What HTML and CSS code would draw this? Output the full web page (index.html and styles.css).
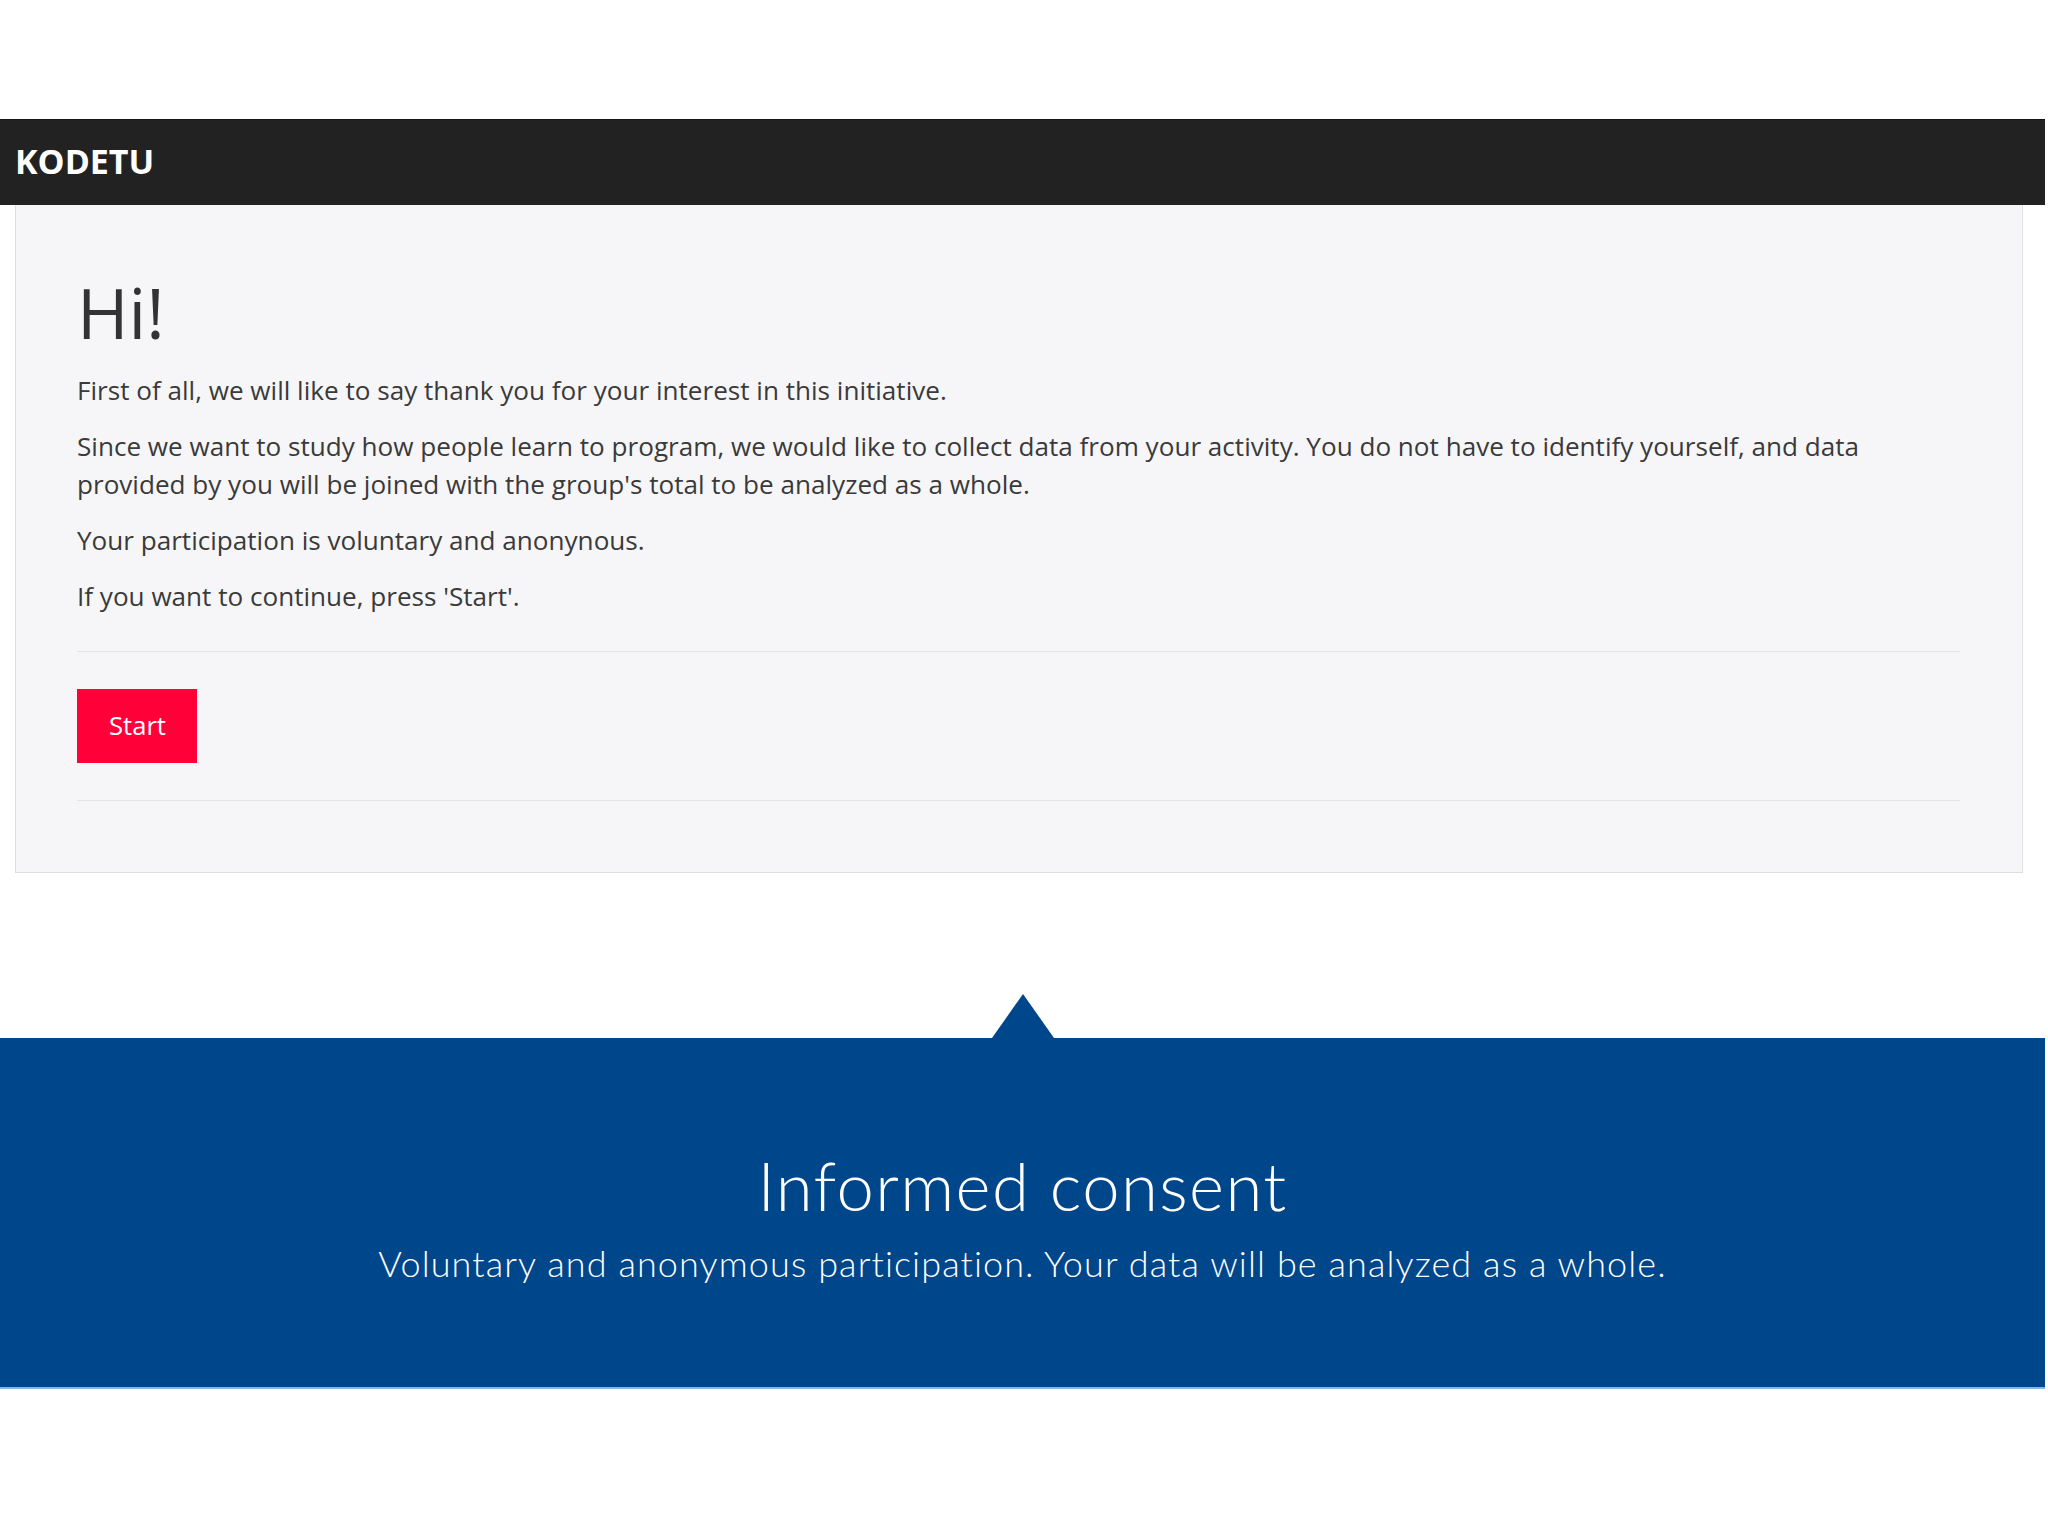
FILE: index.html
```html
<!DOCTYPE html>
<html lang="en">
<head>
<meta charset="utf-8">
<title>KODETU</title>
<link rel="stylesheet" href="styles.css">
</head>
<body>
<div class="page">
  <div class="top-space"></div>
  <header class="navbar">
    <span class="brand">KODETU</span>
  </header>
  <main class="container">
    <section class="jumbotron">
      <h1 class="title">Hi!</h1>
      <p>First of all, we will like to say thank you for your interest in this initiative.</p>
      <p>Since we want to study how people learn to program, we would like to collect data from your activity. You do not have to identify yourself, and data provided by you will be joined with the group's total to be analyzed as a whole.</p>
      <p>Your participation is voluntary and anonynous.</p>
      <p class="last">If you want to continue, press 'Start'.</p>
      <hr class="rule first-rule">
      <button class="btn-start" type="button">Start</button>
      <hr class="rule second-rule">
    </section>
  </main>
  <div class="gap">
    <div class="pointer"></div>
  </div>
  <section class="banner">
    <h2 class="banner-title">Informed consent</h2>
    <p class="banner-sub">Voluntary and anonymous participation. Your data will be analyzed as a whole.</p>
  </section>
  <div class="bottom-space"></div>
</div>
</body>
</html>
```
FILE: styles.css
```css
html, body {
  margin: 0;
  padding: 0;
  background: #ffffff;
}

.page {
  width: 2045px;
  font-family: "Open Sans", "Liberation Sans", sans-serif;
}

.top-space {
  height: 119px;
  background: #ffffff;
}

.navbar {
  height: 86px;
  box-sizing: border-box;
  background: #222222;
  border-top: 1px solid #141414;
  display: flex;
  align-items: center;
  padding-left: 15px;
}

.brand {
  color: #ffffff;
  font-weight: 700;
  font-size: 34px;
  line-height: 1;
  padding-bottom: 4px;
}

.container {
  padding: 0 22px 0 15px;
}

.jumbotron {
  background: #f6f6f8;
  border: 1px solid #dedee0;
  border-top: 0;
  padding: 69px 62px 71px 61px;
  color: #333333;
}

.title {
  margin: 0 0 20px 0;
  font-size: 70px;
  font-weight: 400;
  line-height: 77px;
  color: #333333;
}

.jumbotron p {
  margin: 0 0 17.6px 0;
  font-size: 26.1px;
  line-height: 38.4px;
  color: #3a3a3a;
}

.jumbotron p.last {
  margin-bottom: 0;
}

.rule {
  border: 0;
  border-top: 1px solid #e4e4e6;
  height: 0;
  margin: 0;
}

.first-rule {
  margin-top: 35px;
  margin-bottom: 37px;
}

.second-rule {
  margin-top: 37px;
}

.btn-start {
  display: block;
  background: #ff0039;
  color: #ffffff;
  border: 0;
  border-radius: 0;
  font-family: "Open Sans", "Liberation Sans", sans-serif;
  font-size: 25.6px;
  line-height: 38px;
  padding: 18px 31px 18px 32px;
  margin: 0;
}

.gap {
  height: 165px;
  display: flex;
  justify-content: center;
  align-items: flex-end;
}

.pointer {
  width: 0;
  height: 0;
  border-left: 31px solid transparent;
  border-right: 31px solid transparent;
  border-bottom: 44px solid #00468a;
}

.banner {
  height: 351px;
  box-sizing: border-box;
  background: #00468a;
  border-bottom: 2px solid #8fb2dc;
  text-align: center;
  color: #ffffff;
  padding-top: 107px;
  font-family: "Lato", "Open Sans", sans-serif;
}

.banner-title {
  margin: 0;
  font-size: 67px;
  font-weight: 300;
  line-height: 80px;
  letter-spacing: 1.4px;
}

.banner-sub {
  margin: 17px 0 0 0;
  font-size: 36px;
  font-weight: 300;
  line-height: 43px;
  letter-spacing: 1.1px;
}

.bottom-space {
  height: 146px;
}
```
